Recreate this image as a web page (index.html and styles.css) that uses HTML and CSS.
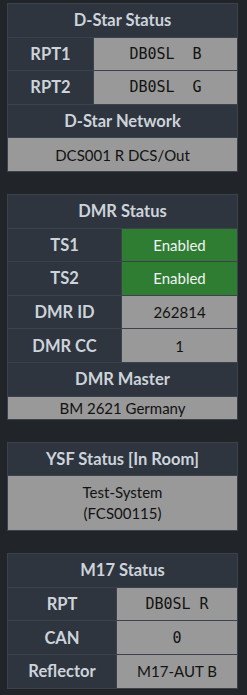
FILE: index.html
```html
<!DOCTYPE html>
<html>
<head>
<meta charset="utf-8">
<link rel="stylesheet" href="styles.css">
</head>
<body>
<div class="side">
  <table class="card">
    <colgroup><col class="c-dstar"><col></colgroup>
    <tr><th colspan="2" class="head">D-Star Status</th></tr>
    <tr><th class="lbl">RPT1</th><td class="val mono">DB0SL  B</td></tr>
    <tr><th class="lbl">RPT2</th><td class="val mono">DB0SL  G</td></tr>
    <tr><th colspan="2" class="head">D-Star Network</th></tr>
    <tr><td colspan="2" class="val">DCS001 R DCS/Out</td></tr>
  </table>

  <table class="card">
    <colgroup><col class="c-dmr"><col></colgroup>
    <tr><th colspan="2" class="head">DMR Status</th></tr>
    <tr><th class="lbl">TS1</th><td class="val on">Enabled</td></tr>
    <tr><th class="lbl">TS2</th><td class="val on">Enabled</td></tr>
    <tr><th class="lbl">DMR ID</th><td class="val">262814</td></tr>
    <tr><th class="lbl">DMR CC</th><td class="val">1</td></tr>
    <tr><th colspan="2" class="head">DMR Master</th></tr>
    <tr><td colspan="2" class="val short">BM 2621 Germany</td></tr>
  </table>

  <table class="card">
    <tr><th class="head">YSF Status [In Room]</th></tr>
    <tr><td class="val tall">Test-System<br>(FCS00115)</td></tr>
  </table>

  <table class="card">
    <colgroup><col class="c-m17"><col></colgroup>
    <tr><th colspan="2" class="head">M17 Status</th></tr>
    <tr><th class="lbl">RPT</th><td class="val mono">DB0SL R</td></tr>
    <tr><th class="lbl">CAN</th><td class="val mono">0</td></tr>
    <tr><th class="lbl">Reflector</th><td class="val">M17-AUT B</td></tr>
  </table>
</div>
</body>
</html>
```

FILE: styles.css
```css
html, body {
  margin: 0;
  padding: 0;
  background: #212429;
}
body {
  font-family: "Lato", "Open Sans", sans-serif;
}
.side {
  display: flex;
  flex-direction: column;
  gap: 22px;
  padding: 3px 0 0 7px;
  width: 231px;
}
.card {
  width: 231px;
  border-collapse: collapse;
  table-layout: fixed;
}
.c-dstar { width: 86px; }
.c-dmr { width: 114px; }
.c-m17 { width: 109px; }
.card th, .card td {
  border: 1px solid #3c424c;
  height: 32.6px;
  padding: 0;
  text-align: center;
  vertical-align: middle;
  font-size: 16.5px;
  line-height: 20px;
}
.head, .lbl {
  background: #2e353f;
  color: #cdd3da;
  font-weight: 700;
}
.val {
  background: #999999;
  color: #121212;
  font-weight: 400;
}
.card .val { font-size: 15px; }
.val.on {
  background: #2e7d32;
  color: #f2f2f2;
}
.card .mono {
  font-family: "DejaVu Sans Mono", monospace;
  font-size: 15px;
  white-space: pre;
}
.card td.short { height: 22px; }
.card td.tall {
  height: 54px;
  line-height: 21px;
}
```
